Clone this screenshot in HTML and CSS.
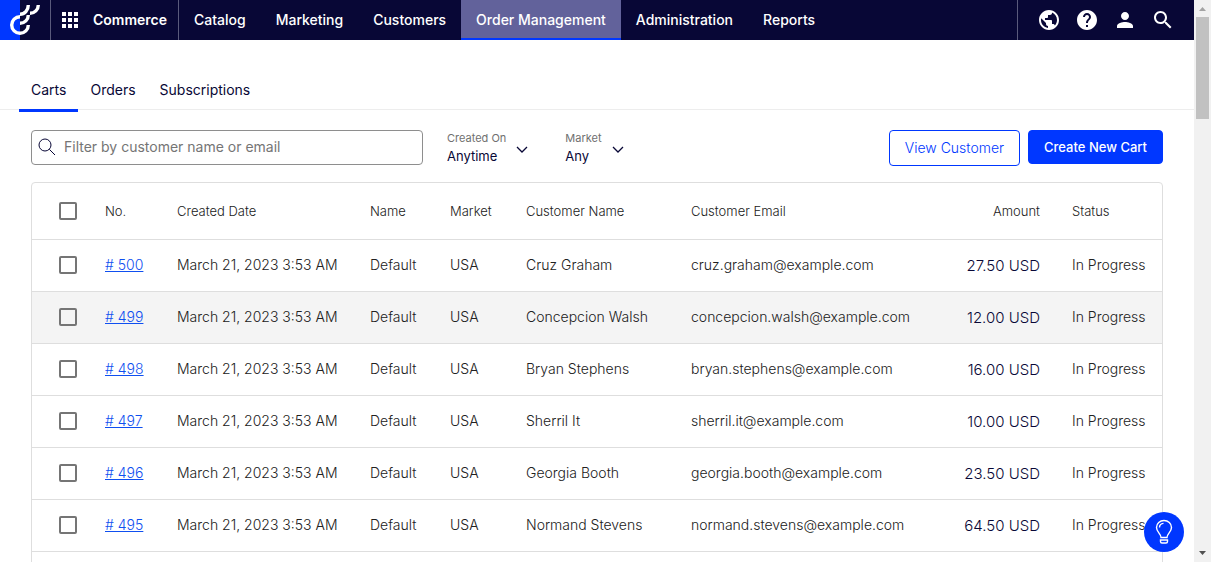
FILE: index.html
```html
<!DOCTYPE html>
<html lang="en">
<head>
    <meta charset="UTF-8">
    <meta name="viewport" content="width=device-width, initial-scale=1.0">
    <title>Order Management - Carts</title>
    <link rel="stylesheet" href="styles.css">
</head>
<body>
    <div class="page">
        <!-- top bar -->
        <header class="topbar">
            <a class="logo" href="#" aria-label="Home">
                <svg width="50" height="40" viewBox="0 0 50 40" fill="none" stroke="#fff" stroke-width="3.4">
                    <path d="M20 16.7a8.3 8.3 0 1 0 8.3 8.3"/>
                    <path d="M20 23.3a8.3 8.3 0 0 0 8.3-8.3"/>
                    <path d="M20 14.300a8.300 9.300 0 0 0 8.300-9.300"/>
                    <path d="M30 13.300a8.300 8.300 0 0 0 8.300-8.300"/>
                </svg>
            </a>
            <a class="product" href="#">
                <svg width="16" height="16" viewBox="0 0 16 16" fill="#fff">
                    <path d="M0 0h4v4H0zM6 0h4v4H6zM12 0h4v4h-4zM0 6h4v4H0zM6 6h4v4H6zM12 6h4v4h-4zM0 12h4v4H0zM6 12h4v4H6zM12 12h4v4h-4z"/>
                </svg>
                <span>Commerce</span>
            </a>
            <nav class="menu">
                <a href="#">Catalog</a>
                <a href="#">Marketing</a>
                <a href="#">Customers</a>
                <a class="active" href="#">Order Management</a>
                <a href="#">Administration</a>
                <a href="#">Reports</a>
            </nav>
            <div class="tools">
                <button type="button" aria-label="Sites">
                    <svg width="24" height="24" viewBox="0 0 24 24" fill="#fff"><path d="M12 2C6.480 2 2 6.480 2 12s4.480 10 10 10 10-4.480 10-10S17.520 2 12 2zm-1 17.930c-3.950-.490-7-3.850-7-7.930 0-.620.080-1.210.210-1.790L9 15v1c0 1.100.900 2 2 2v1.930zm6.900-2.540c-.260-.810-1-1.390-1.900-1.390h-1v-3c0-.550-.450-1-1-1H8v-2h2c.550 0 1-.450 1-1V7h2c1.100 0 2-.900 2-2v-.410c2.930 1.190 5 4.060 5 7.410 0 2.080-.800 3.970-2.100 5.390z"/></svg>
                </button>
                <button type="button" aria-label="Help">
                    <svg width="24" height="24" viewBox="0 0 24 24" fill="#fff"><path d="M12 2C6.480 2 2 6.480 2 12s4.480 10 10 10 10-4.480 10-10S17.520 2 12 2zm1 17h-2v-2h2v2zm2.070-7.750l-.900.920C13.450 12.900 13 13.500 13 15h-2v-.500c0-1.100.450-2.100 1.170-2.830l1.240-1.260c.370-.360.590-.860.590-1.410 0-1.100-.900-2-2-2s-2 .900-2 2H8c0-2.210 1.790-4 4-4s4 1.790 4 4c0 .880-.360 1.680-.930 2.250z"/></svg>
                </button>
                <button type="button" aria-label="Account">
                    <svg width="24" height="24" viewBox="0 0 24 24" fill="#fff"><path d="M12 12c2.210 0 4-1.790 4-4s-1.790-4-4-4-4 1.790-4 4 1.790 4 4 4zm0 2c-2.670 0-8 1.340-8 4v2h16v-2c0-2.660-5.330-4-8-4z"/></svg>
                </button>
                <button type="button" aria-label="Search">
                    <svg width="24" height="24" viewBox="0 0 24 24" fill="#fff"><path d="M15.500 14h-.790l-.280-.270C15.410 12.590 16 11.110 16 9.500 16 5.910 13.090 3 9.500 3S3 5.910 3 9.500 5.910 16 9.500 16c1.610 0 3.090-.590 4.230-1.570l.270.280v.790l5 4.990L20.490 19l-4.990-5zm-6 0C7.010 14 5 11.990 5 9.500S7.010 5 9.500 5 14 7.010 14 9.500 11.990 14 9.500 14z"/></svg>
                </button>
            </div>
        </header>

        <nav class="tabs">
            <a class="active" href="#">Carts</a>
            <a href="#">Orders</a>
            <a href="#">Subscriptions</a>
        </nav>

        <main class="content">
            <!-- filters -->
            <div class="filters">
                <div class="search">
                    <svg width="18" height="18" viewBox="0 0 18 18" fill="none" stroke="#080736">
                        <circle cx="7" cy="7" r="6"/>
                        <path d="M11.300 11.300L17 17"/>
                    </svg>
                    <input type="text" aria-label="Filter carts" placeholder="Filter by customer name or email">
                </div>
                <div class="field">
                    <label for="created">Created On</label>
                    <select id="created"><option>Anytime</option></select>
                    <svg width="12" height="8" viewBox="0 0 12 8" fill="none" stroke="#080736" stroke-width="1.300"><path d="M1 1l5 5 5-5"/></svg>
                </div>
                <div class="field">
                    <label for="market">Market</label>
                    <select id="market"><option>Any</option></select>
                    <svg width="12" height="8" viewBox="0 0 12 8" fill="none" stroke="#080736" stroke-width="1.300"><path d="M1 1l5 5 5-5"/></svg>
                </div>
                <div class="actions">
                    <button type="button" class="btn">View Customer</button>
                    <button type="button" class="btn primary">Create New Cart</button>
                </div>
            </div>

            <!-- carts -->
            <div class="card">
                <table>
                    <colgroup>
                        <col class="c-check"><col class="c-no"><col class="c-date"><col class="c-name"><col class="c-market"><col class="c-customer"><col><col class="c-amount"><col class="c-status">
                    </colgroup>
                    <thead>
                        <tr>
                            <th class="check"><input type="checkbox" aria-label="Select all"></th>
                            <th>No.</th>
                            <th>Created Date</th>
                            <th>Name</th>
                            <th>Market</th>
                            <th>Customer Name</th>
                            <th>Customer Email</th>
                            <th class="right">Amount</th>
                            <th>Status</th>
                        </tr>
                    </thead>
                    <tbody>
                        <tr>
                            <td class="check"><input type="checkbox" aria-label="Select cart 500"></td>
                            <td><a href="#"># 500</a></td>
                            <td>March 21, 2023 3:53 AM</td>
                            <td>Default</td>
                            <td>USA</td>
                            <td>Cruz Graham</td>
                            <td>cruz.graham@example.com</td>
                            <td class="right amount">27.50 USD</td>
                            <td>In Progress</td>
                        </tr>
                        <tr class="hover">
                            <td class="check"><input type="checkbox" aria-label="Select cart 499"></td>
                            <td><a href="#"># 499</a></td>
                            <td>March 21, 2023 3:53 AM</td>
                            <td>Default</td>
                            <td>USA</td>
                            <td>Concepcion Walsh</td>
                            <td>concepcion.walsh@example.com</td>
                            <td class="right amount">12.00 USD</td>
                            <td>In Progress</td>
                        </tr>
                        <tr>
                            <td class="check"><input type="checkbox" aria-label="Select cart 498"></td>
                            <td><a href="#"># 498</a></td>
                            <td>March 21, 2023 3:53 AM</td>
                            <td>Default</td>
                            <td>USA</td>
                            <td>Bryan Stephens</td>
                            <td>bryan.stephens@example.com</td>
                            <td class="right amount">16.00 USD</td>
                            <td>In Progress</td>
                        </tr>
                        <tr>
                            <td class="check"><input type="checkbox" aria-label="Select cart 497"></td>
                            <td><a href="#"># 497</a></td>
                            <td>March 21, 2023 3:53 AM</td>
                            <td>Default</td>
                            <td>USA</td>
                            <td>Sherril It</td>
                            <td>sherril.it@example.com</td>
                            <td class="right amount">10.00 USD</td>
                            <td>In Progress</td>
                        </tr>
                        <tr>
                            <td class="check"><input type="checkbox" aria-label="Select cart 496"></td>
                            <td><a href="#"># 496</a></td>
                            <td>March 21, 2023 3:53 AM</td>
                            <td>Default</td>
                            <td>USA</td>
                            <td>Georgia Booth</td>
                            <td>georgia.booth@example.com</td>
                            <td class="right amount">23.50 USD</td>
                            <td>In Progress</td>
                        </tr>
                        <tr>
                            <td class="check"><input type="checkbox" aria-label="Select cart 495"></td>
                            <td><a href="#"># 495</a></td>
                            <td>March 21, 2023 3:53 AM</td>
                            <td>Default</td>
                            <td>USA</td>
                            <td>Normand Stevens</td>
                            <td>normand.stevens@example.com</td>
                            <td class="right amount">64.50 USD</td>
                            <td>In Progress</td>
                        </tr>
                    </tbody>
                </table>
            </div>
        </main>
    </div>

    <!-- scrollbar -->
    <div class="scrollbar">
        <svg width="17" height="17" viewBox="0 0 17 17" fill="#a3a3a3"><path d="M5 11l3.500-4 3.500 4z"/></svg>
        <div class="thumb"></div>
        <svg width="17" height="17" viewBox="0 0 17 17" fill="#505050"><path d="M5 6l3.500 4L12 6z"/></svg>
    </div>

    <button type="button" class="tips" aria-label="Tips">
        <svg width="20" height="26" viewBox="0 0 20 26" fill="none" stroke="#fff" stroke-width="1.400">
            <path d="M7 18.500c0-4-4.500-5.500-4.500-10a7.500 7 0 0 1 15 0c0 4.500-4.500 6-4.500 10z"/>
            <path d="M5.500 8.500c0-2.200 1.700-3.900 4-4.100"/>
            <path d="M6.500 21h7v1.500c0 1-.700 1.500-1.500 1.500H8c-.800 0-1.500-.500-1.500-1.500z"/>
        </svg>
    </button>
</body>
</html>
```

FILE: styles.css
```css
* {
    box-sizing: border-box;
}
body {
    margin: 0;
    height: 100vh;
    display: flex;
    overflow: hidden;
    background-color: #fff;
    color: #080736;
    font-family: Inter, "Liberation Sans", sans-serif;
    font-size: 14px;
    font-weight: 300;
    line-height: 20px;
}
button, input, select {
    font: inherit;
    color: inherit;
}
a {
    color: inherit;
    text-decoration: none;
}
svg {
    display: block;
    flex: none;
}
.page {
    flex: 1;
    min-width: 0;
    overflow: hidden;
}

/* top bar */
.topbar {
    display: flex;
    height: 40px;
    background-color: #080736;
    color: #fff;
    font-weight: 500;
}
.logo {
    background: linear-gradient(to right, #0037ff 20px, transparent 20px);
}
.product {
    display: flex;
    align-items: center;
    gap: 15px;
    padding: 0 11px;
    border-left: 1px solid #5a5a7c;
    border-right: 1px solid #5a5a7c;
    font-weight: 600;
}
.menu {
    display: flex;
}
.menu a {
    padding: 10px 15px;
}
.menu .active {
    background-color: #62629b;
    border-bottom: 2px solid #0037ff;
}
.tools {
    display: flex;
    align-items: center;
    gap: 14px;
    margin-left: auto;
    padding: 0 19px;
    border-left: 1px solid #5a5a7c;
}
.tools button {
    padding: 0;
    border: 0;
    background: none;
}

/* tabs */
.tabs {
    display: flex;
    height: 70px;
    padding: 30px 0 0 19px;
    border-bottom: 1px solid #ededed;
    font-weight: 400;
}
.tabs a {
    height: 42px;
    padding: 10px 12px;
}
.tabs .active {
    border-bottom: 3px solid #0037ff;
}

.content {
    padding: 20px 31px;
}

/* filters */
.filters {
    display: flex;
    align-items: flex-start;
    margin-bottom: 16px;
}
.search {
    display: flex;
    align-items: center;
    gap: 8px;
    flex: 0 1 392px;
    height: 35px;
    padding: 0 6px 1px;
    border: 1px solid #8e8e8e;
    border-radius: 4px;
}
.search input {
    flex: 1;
    min-width: 0;
    padding: 0;
    border: 0;
    outline: 0;
    background: none;
    font-weight: 400;
}
.search input::placeholder {
    color: #757575;
}
.field {
    display: grid;
    grid-template-columns: auto 12px;
    column-gap: 10px;
    align-items: center;
    margin-left: 24px;
}
.field + .field {
    margin-left: 37px;
}
.field label {
    color: #707070;
    font-size: 11px;
    font-weight: 400;
    line-height: 16px;
}
.field select {
    grid-row: 2;
    width: 100%;
    padding: 0;
    border: 0;
    appearance: none;
    background: none;
    font-size: 13px;
    font-weight: 400;
}
.field svg {
    grid-column: 2;
    grid-row: 1 / 3;
    margin-top: 4px;
}
.actions {
    display: flex;
    align-items: flex-start;
    gap: 8px;
    margin-left: auto;
}
.btn {
    height: 36px;
    padding: 0 15px;
    border: 1px solid #0037ff;
    border-radius: 4px;
    background-color: #fff;
    color: #0037ff;
}
.btn.primary {
    height: 34px;
    background-color: #0037ff;
    color: #fff;
    font-size: 13px;
    font-weight: 500;
}

/* carts table */
.card {
    padding-bottom: 16px;
    border: 1px solid #dedede;
    border-radius: 4px;
}
table {
    width: 100%;
    table-layout: fixed;
    border-collapse: separate;
    border-spacing: 0;
    color: #212121;
}
.c-check { width: 57px; }
.c-no { width: 72px; }
.c-date { width: 193px; }
.c-name { width: 80px; }
.c-market { width: 76px; }
.c-customer { width: 165px; }
.c-amount { width: 120px; }
.c-status { width: 106px; }
th, td {
    height: 52px;
    padding: 0 16px 1px;
    border-bottom: 1px solid #dedede;
    text-align: left;
    font-weight: 300;
    white-space: nowrap;
}
th {
    height: 57px;
    padding-bottom: 0;
    font-size: 13px;
}
.right {
    text-align: right;
}
.amount {
    padding-bottom: 0;
    color: #080736;
    font-size: 15px;
}
.check {
    padding-left: 27px;
    padding-right: 0;
}
td a {
    color: #0f4ff0;
    text-decoration: underline;
}
.hover td {
    background-color: #f4f4f4;
}
.check input {
    display: block;
    width: 18px;
    height: 18px;
    margin: 0;
    appearance: none;
    border: 2px solid #757575;
    border-radius: 2px;
}

/* scrollbar */
.scrollbar {
    display: flex;
    flex-direction: column;
    justify-content: space-between;
    width: 17px;
    background-color: #f1f1f1;
}
.thumb {
    height: 102px;
    margin: 0 2px auto;
    background-color: #c1c1c1;
}

/* floating tips button */
.tips {
    position: fixed;
    right: 27px;
    bottom: 10px;
    display: flex;
    align-items: center;
    justify-content: center;
    width: 40px;
    height: 40px;
    padding: 0;
    border: 0;
    border-radius: 50%;
    background-color: #0037ff;
}
```
